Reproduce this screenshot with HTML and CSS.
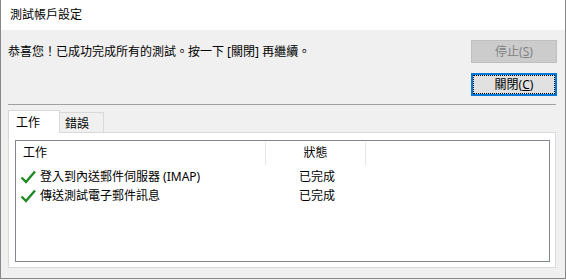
FILE: index.html
```html
<!DOCTYPE html>
<html lang="zh-Hant">
<head>
    <meta charset="UTF-8">
    <title>測試帳戶設定</title>
    <link rel="stylesheet" href="styles.css">
</head>
<body>
    <div class="window">
        <div class="titlebar">測試帳戶設定</div>
        <div class="dialog">
            <div class="top">
                <div class="message">恭喜您！已成功完成所有的測試。按一下 [關閉] 再繼續。</div>
                <div class="buttons">
                    <button class="btn" disabled>停止(<u>S</u>)</button>
                    <button class="btn default"><span class="focus">關閉(<u>C</u>)</span></button>
                </div>
            </div>
            <div class="separator"></div>
            <div class="tabs">
                <div class="tab active">工作</div>
                <div class="tab">錯誤</div>
            </div>
            <div class="panel">
                <div class="list">
                    <div class="list-head">
                        <div class="col-task">工作</div>
                        <div class="col-status">狀態</div>
                    </div>
                    <div class="row">
                        <div class="col-task">
                            <svg class="check" width="16" height="16" viewBox="0 0 16 16"><path d="M1.5 8.5 L6 13 L15 2.5" /></svg>
                            登入到內送郵件伺服器 (IMAP)
                        </div>
                        <div class="col-status">已完成</div>
                    </div>
                    <div class="row">
                        <div class="col-task">
                            <svg class="check" width="16" height="16" viewBox="0 0 16 16"><path d="M1.5 8.5 L6 13 L15 2.5" /></svg>
                            傳送測試電子郵件訊息
                        </div>
                        <div class="col-status">已完成</div>
                    </div>
                </div>
            </div>
        </div>
    </div>
</body>
</html>
```

FILE: styles.css
```css
body {
    margin: 0;
    padding: 0;
    background: #f0f0f0;
    font-family: "Noto Sans", "Noto Sans CJK TC", sans-serif;
    font-size: 12px;
    color: #000;
}
.window {
    width: 566px;
    height: 279px;
    box-sizing: border-box;
    border: 1px solid #888;
    border-top: none;
    background: #f0f0f0;
    display: flex;
    flex-direction: column;
}
.titlebar {
    height: 30px;
    line-height: 30px;
    background: #fff;
    padding-left: 9px;
}
.dialog {
    flex: 1;
    padding: 10px 8px 0 7px;
    display: flex;
    flex-direction: column;
}
.top {
    display: flex;
    justify-content: space-between;
}
.message {
    line-height: 23px;
}
.buttons {
    display: flex;
    flex-direction: column;
    gap: 10px;
}
.btn {
    width: 86px;
    height: 23px;
    box-sizing: border-box;
    margin: 0;
    padding: 0;
    font-family: inherit;
    font-size: 12px;
    line-height: 16px;
    background: #e1e1e1;
    border: 1px solid #adadad;
    color: #000;
}
.btn:disabled {
    background: #cccccc;
    border-color: #bfbfbf;
    color: #838383;
}
.btn.default {
    border: 2px solid #0078d7;
}
.btn .focus {
    display: flex;
    align-items: center;
    justify-content: center;
    height: 100%;
    box-sizing: border-box;
    border: 1px dotted #000;
}
.separator {
    height: 1px;
    background: #a0a0a0;
    margin: 8px 1px 0 0;
}
.tabs {
    display: flex;
    align-items: flex-end;
    height: 23px;
    margin-top: 5px;
}
.tab {
    box-sizing: border-box;
    height: 21px;
    width: 44px;
    padding: 3px 0 0 5px;
    line-height: 16px;
    border: 1px solid #d9d9d9;
    border-left: none;
    background: #f0f0f0;
}
.tab.active {
    position: relative;
    z-index: 1;
    height: 23px;
    width: 52px;
    padding: 4px 0 0 7px;
    border-left: 1px solid #d9d9d9;
    border-bottom: none;
    background: #fff;
}
.panel {
    width: 548px;
    height: 136px;
    box-sizing: border-box;
    margin-top: -1px;
    border: 1px solid #d9d9d9;
    background: #fff;
    padding: 7px 5px 5px 6px;
    display: flex;
}
.list {
    flex: 1;
    border: 1px solid #828790;
    background: #fff;
}
.list-head {
    display: flex;
    height: 24px;
    line-height: 24px;
    margin-bottom: 2px;
}
.list-head .col-task,
.list-head .col-status {
    border-right: 1px solid #e5e5e5;
    margin-top: 1px;
    line-height: 22px;
}
.list-head .col-task {
    padding-left: 7px;
}
.col-task {
    width: 250px;
    box-sizing: border-box;
}
.col-status {
    width: 100px;
    box-sizing: border-box;
    text-align: center;
}
.row {
    display: flex;
    height: 19px;
    line-height: 19px;
}
.row .col-task {
    width: 251px;
    padding-left: 4px;
    display: flex;
    align-items: center;
    gap: 4px;
}
.check {
    flex: none;
}
.check path {
    fill: none;
    stroke: #1f8a25;
    stroke-width: 2.4;
}
```
